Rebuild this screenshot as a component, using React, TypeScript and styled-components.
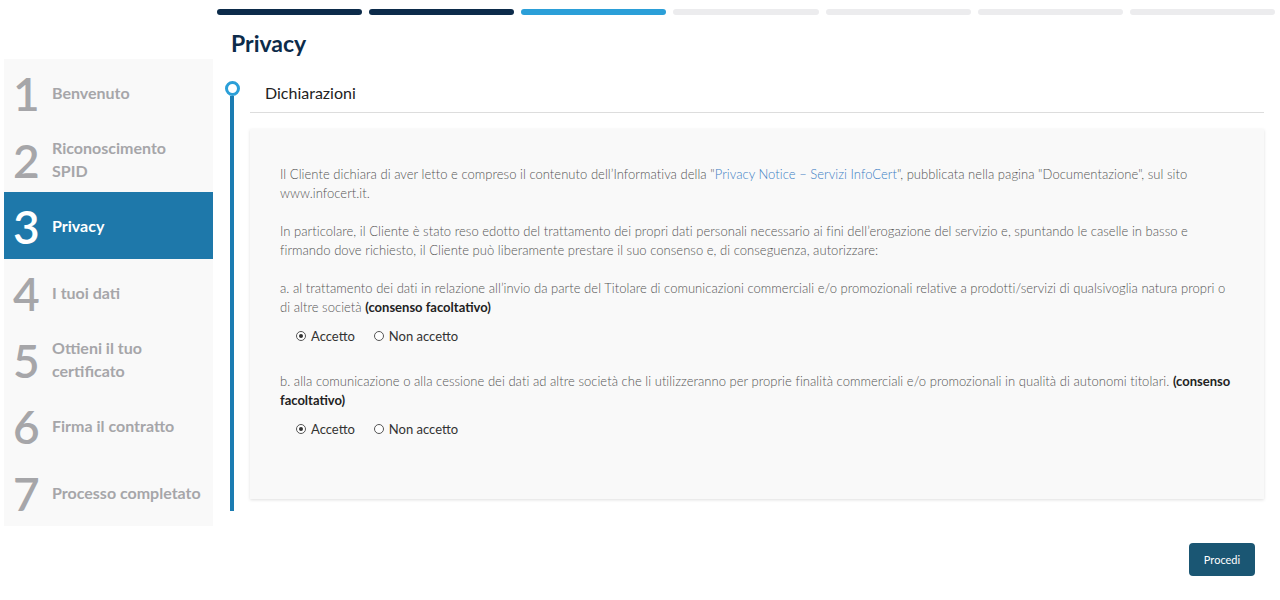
import React from "react";
import styled, { createGlobalStyle } from "styled-components";

const Global = createGlobalStyle`
  html, body { margin: 0; padding: 0; background: #ffffff; }
  body { font-family: Lato, "Open Sans", "Liberation Sans", sans-serif; }
  * { box-sizing: border-box; }
`;

const Page = styled.div`
  display: grid;
  grid-template-columns: 209px 1fr;
  grid-template-rows: 59px auto auto;
  column-gap: 4px;
  padding: 0 5px 0 4px;
  width: 1280px;
`;

const Header = styled.div`
  grid-column: 2;
  grid-row: 1;
  display: flex;
  flex-direction: column;
`;

const Progress = styled.div`
  display: flex;
  gap: 7px;
  margin-top: 9px;
`;

const Segment = styled.div<{ $state: "done" | "current" | "todo" }>`
  flex: 1;
  height: 6px;
  border-radius: 3px;
  background: ${(p) =>
    p.$state === "done" ? "#0c2b4a" : p.$state === "current" ? "#2b9fd8" : "#ececee"};
`;

const Title = styled.h1`
  margin: 14px 0 0 14px;
  font-size: 23px;
  line-height: 29px;
  font-weight: 700;
  color: #0c2b4a;
`;

const Sidebar = styled.nav`
  grid-column: 1;
  grid-row: 2;
  background: #f9f9f9;
  display: flex;
  flex-direction: column;
`;

const Step = styled.div<{ $active?: boolean }>`
  height: 66.72px;
  display: flex;
  align-items: center;
  padding-left: 9px;
  background: ${(p) => (p.$active ? "#1e78aa" : "transparent")};
  color: ${(p) => (p.$active ? "#ffffff" : "#a6a6a9")};
`;

const StepNum = styled.span`
  width: 39px;
  flex: none;
  font-size: 46px;
  line-height: 1;
  font-weight: 600;
  margin-top: 3px;
`;

const StepLabel = styled.span`
  font-size: 16px;
  line-height: 23px;
  font-weight: 700;
`;

const Main = styled.div`
  grid-column: 2;
  grid-row: 2;
  display: flex;
`;

const Timeline = styled.div`
  width: 30px;
  margin-right: 3px;
  padding: 22px 0 15px;
  display: flex;
  flex-direction: column;
  align-items: center;
`;

const Dot = styled.div`
  width: 15px;
  height: 15px;
  flex: none;
  border-radius: 50%;
  border: 3px solid #2b9fd8;
  background: #ffffff;
`;

const Line = styled.div`
  flex: 1;
  width: 4px;
  margin-left: -1px;
  background: #1b7cb2;
`;

const Content = styled.div`
  flex: 1;
  margin-right: 11px;
  display: flex;
  flex-direction: column;
`;

const SectionHead = styled.div`
  padding: 24px 15px 9px;
  font-size: 16px;
  line-height: 20px;
  color: #222222;
  border-bottom: 1px solid #dddddd;
`;

const Card = styled.div`
  margin-top: 16px;
  background: #f9f9f9;
  box-shadow: 0 1px 3px rgba(0, 0, 0, 0.13);
  padding: 36px 30px 60px;
  font-size: 13px;
  line-height: 19px;
  color: #555555;
`;

const Para = styled.p<{ $tight?: boolean }>`
  margin: 0 0 ${(p) => (p.$tight ? "0" : "19px")};
  font-weight: 300;
  letter-spacing: 0.04px;
`;

const Link = styled.span`
  color: #3d7fc4;
`;

const Strong = styled.b`
  color: #222222;
  font-weight: 700;
  letter-spacing: 0;
`;

const Options = styled.div<{ $last?: boolean }>`
  display: flex;
  align-items: center;
  gap: 19px;
  height: 20px;
  margin: 9px 0 ${(p) => (p.$last ? "0" : "26px")} 16px;
`;

const Option = styled.label`
  display: flex;
  align-items: center;
  gap: 5px;
  font-size: 13px;
  color: #333333;
`;

const Radio = styled.input.attrs({ type: "radio" })`
  appearance: none;
  margin: 0;
  width: 10px;
  height: 10px;
  border-radius: 50%;
  border: 1px solid #555555;
  background: #ffffff;
  display: grid;
  place-content: center;
  &:checked::before {
    content: "";
    width: 4px;
    height: 4px;
    border-radius: 50%;
    background: #333333;
  }
`;

const Footer = styled.div`
  grid-column: 2;
  grid-row: 3;
  display: flex;
  justify-content: flex-end;
  padding: 17px 20px 0 0;
`;

const Button = styled.button`
  width: 66px;
  height: 33px;
  border: none;
  border-radius: 4px;
  background: #1a5673;
  color: #ffffff;
  font-family: Lato, "Liberation Sans", sans-serif;
  font-size: 11px;
  cursor: pointer;
`;

const steps = [
  "Benvenuto",
  "Riconoscimento SPID",
  "Privacy",
  "I tuoi dati",
  "Ottieni il tuo certificato",
  "Firma il contratto",
  "Processo completato",
];

const progress: ("done" | "current" | "todo")[] = [
  "done",
  "done",
  "current",
  "todo",
  "todo",
  "todo",
  "todo",
];

function Choice({ name }: { name: string }) {
  return (
    <>
      <Option>
        <Radio name={name} defaultChecked />
        Accetto
      </Option>
      <Option>
        <Radio name={name} />
        Non accetto
      </Option>
    </>
  );
}

export default function App() {
  return (
    <>
      <Global />
      <Page>
        <Header>
          <Progress>
            {progress.map((s, i) => (
              <Segment key={i} $state={s} />
            ))}
          </Progress>
          <Title>Privacy</Title>
        </Header>
        <Sidebar>
          {steps.map((s, i) => (
            <Step key={s} $active={i === 2}>
              <StepNum>{i + 1}</StepNum>
              <StepLabel>
                {s === "Riconoscimento SPID" ? (
                  <>
                    Riconoscimento
                    <br />
                    SPID
                  </>
                ) : s === "Ottieni il tuo certificato" ? (
                  <>
                    Ottieni il tuo
                    <br />
                    certificato
                  </>
                ) : (
                  s
                )}
              </StepLabel>
            </Step>
          ))}
        </Sidebar>
        <Main>
          <Timeline>
            <Dot />
            <Line />
          </Timeline>
          <Content>
            <SectionHead>Dichiarazioni</SectionHead>
            <Card>
              <Para>
                Il Cliente dichiara di aver letto e compreso il contenuto dell’Informativa della "
                <Link>Privacy Notice – Servizi InfoCert</Link>", pubblicata nella pagina
                "Documentazione", sul sito www.infocert.it.
              </Para>
              <Para>
                In particolare, il Cliente è stato reso edotto del trattamento dei propri dati
                personali necessario ai fini dell’erogazione del servizio e, spuntando le caselle in
                basso e firmando dove richiesto, il Cliente può liberamente prestare il suo consenso
                e, di conseguenza, autorizzare:
              </Para>
              <Para $tight>
                a. al trattamento dei dati in relazione all’invio da parte del Titolare di
                comunicazioni commerciali e/o promozionali relative a prodotti/servizi di
                qualsivoglia natura propri o di altre società <Strong>(consenso facoltativo)</Strong>
              </Para>
              <Options>
                <Choice name="a" />
              </Options>
              <Para $tight>
                b. alla comunicazione o alla cessione dei dati ad altre società che li utilizzeranno
                per proprie finalità commerciali e/o promozionali in qualità di autonomi titolari.{" "}
                <Strong>(consenso facoltativo)</Strong>
              </Para>
              <Options $last>
                <Choice name="b" />
              </Options>
            </Card>
          </Content>
        </Main>
        <Footer>
          <Button>Procedi</Button>
        </Footer>
      </Page>
    </>
  );
}
